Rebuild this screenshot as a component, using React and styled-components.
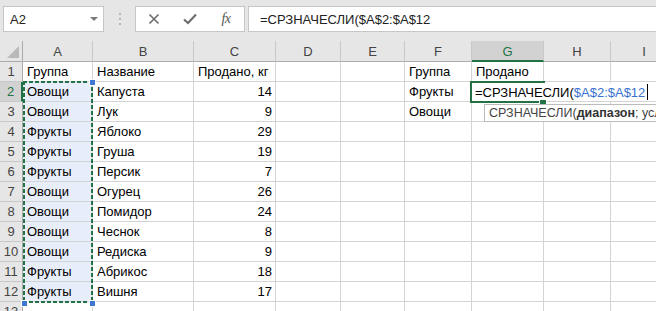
import React from 'react';
import styled, { createGlobalStyle } from 'styled-components';

const GREEN = '#217346';
const GRID = '#d4d4d4';
const HEAD_LINE = '#ababab';

const GlobalStyle = createGlobalStyle`
  html, body {
    margin: 0;
    padding: 0;
    background: #fff;
    overflow: hidden;
  }
  body {
    font-family: 'Liberation Sans', Arial, sans-serif;
    font-size: 13px;
    color: #000;
  }
`;

const Window = styled.div`
  width: 656px;
  height: 311px;
  overflow: hidden;
  display: flex;
  flex-direction: column;
  background: #fff;
`;

const FormulaBar = styled.div`
  flex: none;
  height: 41px;
  box-sizing: border-box;
  background: #e6e6e6;
  display: flex;
  align-items: flex-start;
  padding: 6px 0 0 3px;
`;

const NameBox = styled.div`
  width: 101px;
  height: 26px;
  box-sizing: border-box;
  background: #fff;
  border: 1px solid #c6c6c6;
  display: flex;
  align-items: center;
  justify-content: space-between;
  padding: 0 5px 0 6px;
  color: #222;
`;

const DropArrow = styled.span`
  width: 0;
  height: 0;
  border-left: 4px solid transparent;
  border-right: 4px solid transparent;
  border-top: 4px solid #7a7a7a;
`;

const Grip = styled.div`
  width: 31px;
  height: 26px;
  display: flex;
  flex-direction: column;
  align-items: center;
  justify-content: center;
  gap: 3px;

  span {
    width: 2px;
    height: 2px;
    background: #b4b4b4;
  }
`;

const Buttons = styled.div`
  width: 110px;
  height: 26px;
  box-sizing: border-box;
  background: #fff;
  border: 1px solid #c6c6c6;
  display: flex;
  align-items: center;
`;

const ToolButton = styled.div`
  width: 36px;
  height: 24px;
  display: flex;
  align-items: center;
  justify-content: center;
  color: #6b6b6b;
`;

const Fx = styled.span`
  font-family: 'Liberation Serif', 'Times New Roman', serif;
  font-style: italic;
  font-size: 14px;
  color: #555;
  letter-spacing: -0.5px;
`;

const FormulaInput = styled.div`
  flex: 1;
  height: 26px;
  margin-left: 3px;
  margin-right: -4px;
  box-sizing: border-box;
  background: #fff;
  border: 1px solid #c6c6c6;
  display: flex;
  align-items: center;
  padding-left: 11px;
  color: #222;
  white-space: nowrap;
`;

const Sheet = styled.div`
  position: relative;
  flex: none;
  display: grid;
  grid-template-columns: 23px 70px 101px 82px 65px 64px 67px 72px 67px 67px;
  grid-template-rows: 21px;
  grid-auto-rows: 20px;
  width: 678px;
`;

const Corner = styled.div`
  position: relative;
  background: #e6e6e6;
  border-right: 1px solid ${HEAD_LINE};
  border-bottom: 1px solid ${HEAD_LINE};
  box-sizing: border-box;

  &::after {
    content: '';
    position: absolute;
    right: 3px;
    bottom: 3px;
    width: 12px;
    height: 12px;
    background: #b9b9b9;
    clip-path: polygon(100% 0, 100% 100%, 0 100%);
  }
`;

const ColHead = styled.div`
  box-sizing: border-box;
  background: ${p => (p.$active ? '#d2d2d2' : '#e6e6e6')};
  color: ${p => (p.$active ? GREEN : '#444')};
  border-right: 1px solid #c8c8c8;
  border-bottom: ${p => (p.$active ? `2px solid ${GREEN}` : `1px solid ${HEAD_LINE}`)};
  display: flex;
  align-items: center;
  justify-content: center;
  padding-top: ${p => (p.$active ? '1px' : '0')};
`;

const RowHead = styled.div`
  box-sizing: border-box;
  background: ${p => (p.$active ? '#d2d2d2' : '#e6e6e6')};
  color: ${p => (p.$active ? GREEN : '#444')};
  border-right: ${p => (p.$active ? `2px solid ${GREEN}` : `1px solid ${HEAD_LINE}`)};
  border-bottom: 1px solid #c8c8c8;
  display: flex;
  align-items: center;
  justify-content: center;
`;

const Cell = styled.div`
  box-sizing: border-box;
  background: ${p => (p.$fill ? '#e8eef9' : '#fff')};
  border-right: 1px solid ${GRID};
  border-bottom: 1px solid ${GRID};
  padding: 1px 3px 0 4px;
  line-height: 18px;
  white-space: nowrap;
  text-align: ${p => (p.$num ? 'right' : 'left')};
`;

const Ants = styled.div`
  position: absolute;
  left: 23px;
  top: 40px;
  width: 70px;
  height: 222px;
  pointer-events: none;
  background:
    repeating-linear-gradient(90deg, ${GREEN} 0 4px, transparent 4px 6px) top left / 100% 2px no-repeat,
    repeating-linear-gradient(90deg, ${GREEN} 0 4px, transparent 4px 6px) bottom left / 100% 2px no-repeat,
    repeating-linear-gradient(180deg, ${GREEN} 0 4px, transparent 4px 6px) top left / 2px 100% no-repeat,
    repeating-linear-gradient(180deg, ${GREEN} 0 4px, transparent 4px 6px) top right / 2px 100% no-repeat;
`;

const Handle = styled.span`
  position: absolute;
  width: 5px;
  height: 5px;
  background: #3f78d1;
  border: 1px solid #fff;
  left: ${p => p.$x}px;
  top: ${p => p.$y}px;
`;

const ActiveCell = styled.div`
  position: absolute;
  left: 470px;
  top: 40px;
  width: 75px;
  height: 22px;
  box-sizing: border-box;
  border: 2px solid ${GREEN};
  border-right: none;
`;

const FillHandle = styled.span`
  position: absolute;
  left: 539px;
  top: 58px;
  width: 6px;
  height: 6px;
  background: ${GREEN};
  border: 1px solid #fff;
`;

const Editor = styled.div`
  position: absolute;
  left: 472px;
  top: 42px;
  width: 210px;
  height: 18px;
  background: #fff;
  display: flex;
  align-items: center;
  padding-left: 3px;
  white-space: nowrap;
  box-sizing: border-box;
`;

const RangeRef = styled.span`
  color: #3b73cf;
`;

const Caret = styled.span`
  display: inline-block;
  width: 1px;
  height: 16px;
  background: #000;
  margin-left: 2px;
`;

const Tip = styled.div`
  position: absolute;
  left: 484px;
  top: 63px;
  height: 18px;
  box-sizing: border-box;
  background: #fff;
  border: 1px solid #bcbcbc;
  padding: 0 4px;
  display: flex;
  align-items: center;
  font-size: 12.5px;
  color: #444;
  white-space: nowrap;

  b {
    font-weight: bold;
    color: #333;
  }
`;

const cols = ['A', 'B', 'C', 'D', 'E', 'F', 'G', 'H', 'I'];

const rows = [
  ['Группа', 'Название', 'Продано, кг', '', '', 'Группа', 'Продано'],
  ['Овощи', 'Капуста', '14', '', '', 'Фрукты', ''],
  ['Овощи', 'Лук', '9', '', '', 'Овощи', ''],
  ['Фрукты', 'Яблоко', '29'],
  ['Фрукты', 'Груша', '19'],
  ['Фрукты', 'Персик', '7'],
  ['Овощи', 'Огурец', '26'],
  ['Овощи', 'Помидор', '24'],
  ['Овощи', 'Чеснок', '8'],
  ['Овощи', 'Редиска', '9'],
  ['Фрукты', 'Абрикос', '18'],
  ['Фрукты', 'Вишня', '17'],
  [],
];

const CrossIcon = () => (
  <svg width="12" height="12" viewBox="0 0 12 12">
    <path d="M1.5 1.5 L10.5 10.5 M10.5 1.5 L1.5 10.5" stroke="#6b6b6b" strokeWidth="1.6" fill="none" />
  </svg>
);

const CheckIcon = () => (
  <svg width="14" height="12" viewBox="0 0 14 12">
    <path d="M1 6.5 L5 10 L13 1.5" stroke="#6b6b6b" strokeWidth="2" fill="none" />
  </svg>
);

const App = () => {
  return (
    <Window>
      <GlobalStyle />
      <FormulaBar>
        <NameBox>
          <span>A2</span>
          <DropArrow />
        </NameBox>
        <Grip>
          <span />
          <span />
          <span />
        </Grip>
        <Buttons>
          <ToolButton><CrossIcon /></ToolButton>
          <ToolButton><CheckIcon /></ToolButton>
          <ToolButton><Fx>fx</Fx></ToolButton>
        </Buttons>
        <FormulaInput>=СРЗНАЧЕСЛИ($A$2:$A$12</FormulaInput>
      </FormulaBar>

      <Sheet>
        <Corner />
        {cols.map(c => (
          <ColHead key={c} $active={c === 'G'}>{c}</ColHead>
        ))}
        {rows.map((row, r) => (
          <React.Fragment key={r}>
            <RowHead $active={r === 1}>{r + 1}</RowHead>
            {cols.map((c, ci) => {
              const value = row[ci] || '';
              return (
                <Cell
                  key={c}
                  $num={ci === 2 && r > 0}
                  $fill={ci === 0 && r >= 1 && r <= 11}
                >
                  {value}
                </Cell>
              );
            })}
          </React.Fragment>
        ))}

        <Ants />
        <Handle $x={89} $y={38} />
        <Handle $x={21} $y={259} />
        <Handle $x={89} $y={259} />

        <ActiveCell />
        <Editor>
          =СРЗНАЧЕСЛИ(<RangeRef>$A$2:$A$12</RangeRef>
          <Caret />
        </Editor>
        <FillHandle />
        <Tip>
          СРЗНАЧЕСЛИ(<b>диапазон</b>; условие; [диапазон_усреднения])
        </Tip>
      </Sheet>
    </Window>
  );
};

export default App;
